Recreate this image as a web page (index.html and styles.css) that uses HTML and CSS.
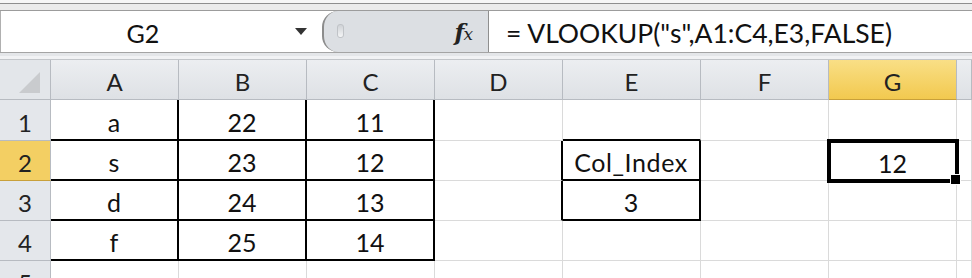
FILE: index.html
```html
<!DOCTYPE html>
<html lang="en">
<head>
    <meta charset="UTF-8">
    <meta name="viewport" content="width=device-width, initial-scale=1.0">
    <title>VLOOKUP</title>
    <link rel="stylesheet" href="styles.css">
</head>
<body>
    <div class="window">
        <div class="ribbon-edge"></div>

        <!-- name box + formula bar -->
        <div class="formula-bar">
            <div class="name-box">
                <span class="cell-name">G2</span>
                <span class="drop"></span>
            </div>
            <div class="fx-area">
                <span class="grip"></span>
                <span class="fx">f<i>x</i></span>
            </div>
            <div class="formula">= VLOOKUP("s",A1:C4,E3,FALSE)</div>
        </div>
        <div class="bar-gap"></div>

        <!-- worksheet -->
        <div class="sheet">
            <div class="hd corner"><span class="tri"></span></div>
            <div class="hd col">A</div>
            <div class="hd col">B</div>
            <div class="hd col">C</div>
            <div class="hd col">D</div>
            <div class="hd col">E</div>
            <div class="hd col">F</div>
            <div class="hd col active">G</div>
            <div class="hd col"></div>

            <div class="hd row">1</div>
            <div class="c bx">a</div>
            <div class="c bx">22</div>
            <div class="c bx">11</div>
            <div class="c"></div>
            <div class="c bb"></div>
            <div class="c"></div>
            <div class="c"></div>
            <div class="c"></div>

            <div class="hd row active">2</div>
            <div class="c bx">s</div>
            <div class="c bx">23</div>
            <div class="c bx">12</div>
            <div class="c br"></div>
            <div class="c bx wide">Col_Index</div>
            <div class="c"></div>
            <div class="c selected">12</div>
            <div class="c"></div>

            <div class="hd row">3</div>
            <div class="c bx">d</div>
            <div class="c bx">24</div>
            <div class="c bx">13</div>
            <div class="c br"></div>
            <div class="c bx">3</div>
            <div class="c"></div>
            <div class="c"></div>
            <div class="c"></div>

            <div class="hd row">4</div>
            <div class="c bx">f</div>
            <div class="c bx">25</div>
            <div class="c bx">14</div>
            <div class="c"></div>
            <div class="c"></div>
            <div class="c"></div>
            <div class="c"></div>
            <div class="c"></div>

            <div class="hd row">5</div>
            <div class="c"></div>
            <div class="c"></div>
            <div class="c"></div>
            <div class="c"></div>
            <div class="c"></div>
            <div class="c"></div>
            <div class="c"></div>
            <div class="c"></div>
        </div>
    </div>
</body>
</html>
```

FILE: styles.css
```css
* {
    box-sizing: border-box;
}

body {
    margin: 0;
    background: #fff;
    font-family: Lato, "Liberation Sans", sans-serif;
    color: #111;
}

.window {
    width: 972px;
    height: 278px;
    overflow: hidden;
}

.ribbon-edge {
    height: 11px;
    background: #ebebeb;
    border-top: 3px solid #f6f6f6;
    box-shadow: inset 0 1px 0 #8e8e8e, inset 0 -1px 0 #9c9c9c;
}

/* formula bar */
.formula-bar {
    display: flex;
    height: 42px;
    border-bottom: 1px solid #a4a4a4;
}

.name-box {
    display: flex;
    align-items: center;
    width: 322px;
    background: #fff;
    border-left: 1px solid #b0b0b0;
}

.cell-name {
    width: 284px;
    text-align: center;
    font-size: 25px;
    padding-top: 2px;
}

.drop {
    width: 0;
    height: 0;
    margin-left: 10px;
    border-left: 6px solid transparent;
    border-right: 6px solid transparent;
    border-top: 7px solid #333;
}

.fx-area {
    position: relative;
    display: flex;
    align-items: center;
    justify-content: flex-end;
    width: 167px;
    padding-right: 16px;
    background: #dcdfe3;
    border-left: 2px solid #8c8c8c;
    border-right: 1px solid #8f8f8f;
    border-radius: 16px 0 0 16px;
}

.grip {
    position: absolute;
    left: 13px;
    top: 13px;
    width: 7px;
    height: 14px;
    border-radius: 3px;
    background: linear-gradient(#cfd2d6, #f4f5f6);
    border: 1px solid #c0c3c7;
}

.fx {
    font-family: "DejaVu Serif", "Liberation Serif", serif;
    font-style: italic;
    font-weight: bold;
    font-size: 23px;
    color: #222;
    letter-spacing: -1px;
}

.fx i {
    font-size: 17px;
    font-weight: normal;
}

.formula {
    flex: 1;
    display: flex;
    align-items: center;
    padding-left: 17px;
    padding-top: 2px;
    font-size: 26.5px;
    background: #fff;
}

.bar-gap {
    height: 7px;
    background: #f1f2f4;
    border-bottom: 1px solid #c3c6ca;
    box-shadow: inset 0 3px 0 #e4e6e9;
}

/* worksheet grid */
.sheet {
    display: grid;
    grid-template-columns: 51px 128px 128px 128px 128px 138px 128px 128px 1fr;
    grid-template-rows: 40px 41px 40px 40px 40px 40px;
}

.hd {
    display: flex;
    align-items: center;
    justify-content: center;
    font-size: 24px;
    color: #222;
    border-right: 1px solid #b7bbc1;
    border-bottom: 1px solid #b7bbc1;
}

.hd.col {
    padding-top: 4px;
    background: linear-gradient(#eceef1, #dee1e5);
}

.hd.row {
    padding-top: 4px;
    background: #e4e7eb;
}

.hd.active {
    background: linear-gradient(#f9df86, #f2c94f);
    border-bottom-color: #c8a03a;
}

.hd.row.active {
    background: #f3cf63;
}

.corner {
    position: relative;
    background: #e3e6ea;
}

.tri {
    position: absolute;
    right: 10px;
    bottom: 6px;
    width: 0;
    height: 0;
    border-left: 21px solid transparent;
    border-bottom: 21px solid #c9cbce;
}

.c {
    display: flex;
    align-items: center;
    justify-content: center;
    padding-top: 4px;
    font-size: 25px;
    border-right: 1px solid #dadada;
    border-bottom: 1px solid #dadada;
}

.c.wide {
    letter-spacing: 0.6px;
}

/* black cell borders */
.bx {
    border-right: 2px solid #000;
    border-bottom: 2px solid #000;
}

.bb {
    border-bottom: 2px solid #000;
}

.br {
    border-right: 2px solid #000;
}

.selected {
    position: relative;
    outline: 4px solid #000;
    outline-offset: -2px;
}

.selected::after {
    content: "";
    position: absolute;
    right: -5px;
    bottom: -5px;
    width: 9px;
    height: 9px;
    background: #000;
    border: 1px solid #fff;
}
```
